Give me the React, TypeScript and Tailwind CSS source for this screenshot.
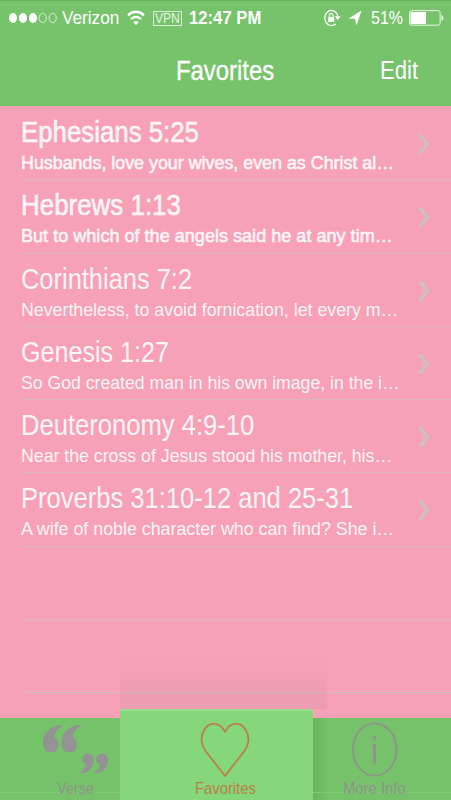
import { useLayoutEffect, useRef, useState } from 'react';

interface Verse {
  title: string;
  titleWidth: number;
  text: string;
  textWidth: number;
  unread?: boolean;
}

const verses: Verse[] = [
  {
    title: 'Ephesians 5:25',
    titleWidth: 178,
    text: 'Husbands, love your wives, even as Christ al…',
    textWidth: 373,
    unread: true,
  },
  {
    title: 'Hebrews 1:13',
    titleWidth: 160,
    text: 'But to which of the angels said he at any tim…',
    textWidth: 372,
    unread: true,
  },
  {
    title: 'Corinthians 7:2',
    titleWidth: 171,
    text: 'Nevertheless, to avoid fornication, let every m…',
    textWidth: 377,
  },
  {
    title: 'Genesis 1:27',
    titleWidth: 148,
    text: 'So God created man in his own image, in the i…',
    textWidth: 379,
  },
  {
    title: 'Deuteronomy 4:9-10',
    titleWidth: 233,
    text: 'Near the cross of Jesus stood his mother, his…',
    textWidth: 371,
  },
  {
    title: 'Proverbs 31:10-12 and 25-31',
    titleWidth: 332,
    text: 'A wife of noble character who can find? She i…',
    textWidth: 373,
  },
];

interface CondensedProps {
  children: string;
  width: number;
  className?: string;
}

// Squeezes a single line of text horizontally to the given width
function Condensed({ children, width, className = '' }: CondensedProps) {
  const ref = useRef<HTMLSpanElement>(null);
  const [scale, setScale] = useState(1);

  useLayoutEffect(() => {
    if (ref.current) {
      setScale(width / ref.current.offsetWidth);
    }
  }, [width, children]);

  return (
    <div className={`whitespace-nowrap ${className}`} style={{ width }}>
      <span
        ref={ref}
        className="inline-block origin-left align-top"
        style={{ transform: `scaleX(${scale})` }}
      >
        {children}
      </span>
    </div>
  );
}

function StatusBar() {
  return (
    <div className="flex h-[34px] items-center pl-[9px] text-[19px] leading-[34px]">
      <svg width="49" height="12" viewBox="0 0 49 12" fill="#fff">
        <ellipse cx="4" cy="6" rx="4" ry="5" />
        <ellipse cx="14" cy="6" rx="4" ry="5" />
        <ellipse cx="24" cy="6" rx="4" ry="5" />
        <ellipse cx="33.7" cy="6" rx="3.6" ry="4.6" fill="none" stroke="#e4f5e0" strokeWidth="0.9" />
        <ellipse cx="43.7" cy="6" rx="3.6" ry="4.6" fill="none" stroke="#e4f5e0" strokeWidth="0.9" />
      </svg>
      <Condensed width={57} className="ml-1">
        Verizon
      </Condensed>
      <svg className="ml-2" width="18" height="16" viewBox="0 0 18 16" fill="none" stroke="#fff">
        <path d="M1 5.3C5.5 0.7 12.5 0.7 17 5.3" strokeWidth="2.5" />
        <path d="M4 9.1C7 6.1 11 6.1 14 9.1" strokeWidth="2.4" />
        <path d="M6.3 12C8 10.5 10 10.5 11.7 12L9 15.3Z" fill="#fff" stroke="none" />
      </svg>
      <div className="ml-2 flex h-[15px] w-[29px] items-center justify-center border border-[#d8f0d3] text-[14.5px] leading-[14px] text-[#e4f5e0]">
        <Condensed width={25}>VPN</Condensed>
      </div>
      <Condensed width={72} className="ml-[7px] font-bold">
        12:47 PM
      </Condensed>
      <svg className="ml-[63px]" width="17" height="18" viewBox="0 0 17 18">
        <path d="M11.7 14.8A6.6 7.6 0 1 1 13.9 7.5" fill="none" stroke="#fff" strokeWidth="1.2" />
        <path d="M10.8 7.2H16.6L13.7 11Z" fill="#fff" />
        <rect x="4.2" y="8" width="6" height="5" fill="#fff" />
        <path d="M5.4 8V6.4A1.8 2 0 0 1 9 6.4V8" fill="none" stroke="#fff" strokeWidth="1.1" />
      </svg>
      <svg className="ml-[7px]" width="14" height="16" viewBox="0 0 14 16" fill="#fff">
        <path d="M13.5 0.5L8.6 15.5L7 8.8H0.3Z" />
      </svg>
      <Condensed width={32} className="ml-[9px]">
        51%
      </Condensed>
      <svg className="ml-[6px]" width="35" height="16" viewBox="0 0 35 16">
        <rect x="0.6" y="0.6" width="30.5" height="14.6" rx="2" fill="none" stroke="#e9f7e6" strokeWidth="1" />
        <rect x="1.5" y="2" width="15.5" height="12" fill="#fff" />
        <path d="M32.5 5C35 5.8 35 10.2 32.5 11Z" fill="#fff" />
      </svg>
    </div>
  );
}

function Header() {
  return (
    <header className="h-[106px] shrink-0 border-t border-[#69b55e] bg-[#76c36b] text-white">
      <StatusBar />
      <div className="flex h-[71px] items-center pl-[176px]">
        <Condensed
          width={98}
          className="text-[28.5px] leading-[71px] [-webkit-text-stroke:0.3px_white]"
        >
          Favorites
        </Condensed>
        <Condensed width={38} className="ml-[106px] text-[25px] leading-[71px]">
          Edit
        </Condensed>
      </div>
    </header>
  );
}

function VerseRow({ title, titleWidth, text, textWidth, unread }: Verse) {
  return (
    <li className="ml-[21px] flex h-[73.3px] items-start justify-between border-b border-[#dab7c1] pr-[21px]">
      <div
        className={`pt-[9px] ${unread ? '[-webkit-text-stroke:0.6px_#fff5f7]' : ''}`}
      >
        <Condensed width={titleWidth} className="text-[29px] leading-[32px]">
          {title}
        </Condensed>
        <Condensed width={textWidth} className="mt-1 text-[19px] leading-[22px]">
          {text}
        </Condensed>
      </div>
      <svg className="mt-[26px] shrink-0" width="12" height="22" viewBox="0 0 12 22">
        <path d="M1.8 1.5L9.5 11L1.8 20.5" fill="none" stroke="#cdbfc5" strokeWidth="3.4" />
      </svg>
    </li>
  );
}

function TabBar() {
  return (
    <nav className="flex h-[91px] shrink-0 items-end text-[16px] leading-[18px] text-[#8f9389]">
      <div className="relative h-[82px] w-[120px] bg-[#76c36b] pt-[6px]">
        <div className="absolute top-[74px] h-px w-full bg-[#80c975]" />
        <svg className="relative ml-[42px]" width="68" height="51" viewBox="0 0 68 51" fill="#939393">
          <path d="M20 1C8 1.5 1 9 1 18.5C1 24.5 4 28.5 9 28.5C13.5 28.5 16.5 25 16.5 20.5C16.5 17 15 14.5 12.3 13.3C12.5 9 16 4.5 20 2Z" />
          <path d="M38.5 1C26.5 1.5 19.5 9 19.5 18.5C19.5 24.5 22.5 28.5 27.5 28.5C32 28.5 35 25 35 20.5C35 17 33.5 14.5 30.8 13.3C31 9 34.5 4.5 38.5 2Z" />
          <path d="M38.5 49.3C47 49 51.8 43 51.8 36.7C51.8 32 49.3 29.5 45.8 29.5C42.5 29.5 40.2 32 40.2 35C40.2 37.5 41.5 39.5 43.8 40.3C43.5 43.5 41.5 46.5 38.5 48.3Z" />
          <path d="M52.5 49.3C61 49 65.8 43 65.8 36.7C65.8 32 63.3 29.5 59.8 29.5C56.5 29.5 54.2 32 54.2 35C54.2 37.5 55.5 39.5 57.8 40.3C57.5 43.5 55.5 46.5 52.5 48.3Z" />
        </svg>
        <Condensed width={37} className="relative ml-[57px] mt-[5px]">
          Verse
        </Condensed>
      </div>
      <div className="relative h-[91px] w-[193px] border-t-2 border-[#95df87] bg-[#86d67c] pt-[11px] text-[#b58345]">
        <div className="absolute -top-[56px] left-0 h-[54px] w-[207px] bg-linear-to-b from-[#c48a9c]/0 to-[#c48a9c]/20" />
        <svg className="ml-[79px]" width="52" height="57" viewBox="0 0 52 57">
          <path
            d="M26 54L7 29.5C1.5 21.5 1.5 13.5 5.5 7.5C10.5 -0.5 21.500 -0.5 26 10C30.5 -0.5 41.5 -0.5 46.5 7.5C50.5 13.5 50.5 21.5 45 29.5Z"
            fill="none"
            stroke="#b58345"
            strokeWidth="1.8"
            strokeLinejoin="round"
          />
        </svg>
        <Condensed width={61} className="ml-[75px] mt-[1px]">
          Favorites
        </Condensed>
      </div>
      <div className="relative h-[82px] w-[138px] bg-[#76c36b] pt-1">
        <div className="absolute left-0 top-0 h-full w-[16px] bg-linear-to-r from-[#69b45f] to-[#76c36b]" />
        <div className="absolute top-[74px] h-px w-full bg-[#80c975]" />
        <svg className="relative ml-[39px]" width="46" height="56" viewBox="0 0 46 56">
          <ellipse cx="22.7" cy="27.5" rx="21.8" ry="26.2" fill="none" stroke="#8f938b" strokeWidth="1.8" />
          <rect x="21" y="14" width="3" height="3.5" fill="#8f938b" />
          <path d="M20 22H24V41.5H21.2V23.5H20Z" fill="#8f938b" />
        </svg>
        <Condensed width={63} className="relative ml-[30px] mt-[2px]">
          More Info
        </Condensed>
      </div>
    </nav>
  );
}

function App() {
  return (
    <div className="flex h-[800px] w-[451px] flex-col overflow-hidden bg-[#f6a1b6] font-['Liberation_Sans',Arial,sans-serif]">
      <Header />
      <ul className="h-[603px] shrink-0 pt-px text-[#fff5f7]">
        {verses.map((verse) => (
          <VerseRow key={verse.title} {...verse} />
        ))}
        <li className="ml-[21px] h-[73.3px] border-b border-[#dab7c1]" />
        <li className="ml-[21px] h-[73.3px] border-b border-[#d0bcc3]" />
      </ul>
      <TabBar />
    </div>
  );
}

export default App;
